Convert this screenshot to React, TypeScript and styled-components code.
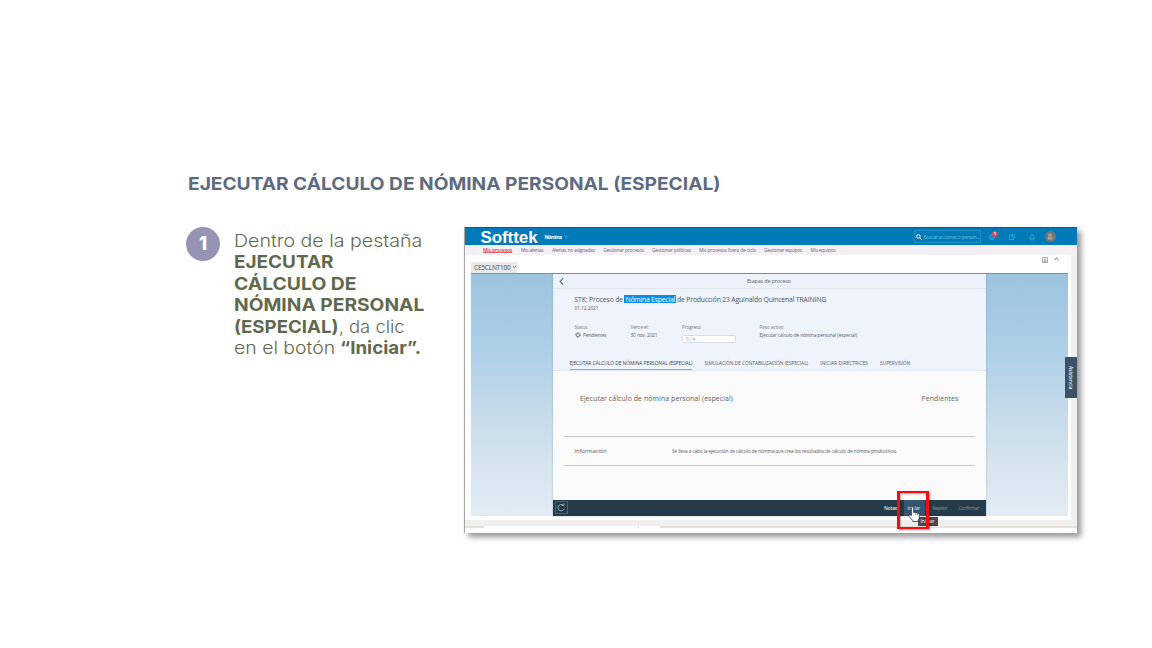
import React, { useLayoutEffect, useRef, useState } from "react";
import styled, { createGlobalStyle } from "styled-components";

const GlobalStyle = createGlobalStyle`
  * { box-sizing: border-box; }
  body { margin: 0; background: #fff; }
`;

const Slide = styled.main`
  width: 1152px;
  height: 648px;
  padding: 172px 0 0 186px;
  overflow: hidden;
  background: #fff;
  font-family: Inter, "Open Sans", sans-serif;
`;

const FitBox = styled.span<{ $w: number }>`
  display: inline-block;
  width: ${(p) => p.$w}px;
  white-space: nowrap;
  flex: none;
`;
const Run = styled.span`
  display: inline-block;
  transform-origin: 0 50%;
`;

/* Tracks a run of text so that it fills a given measure. */
function Fit({ w, children }: { w: number; children: string }) {
  const ref = useRef<HTMLSpanElement>(null);
  const [tracking, setTracking] = useState(0);
  useLayoutEffect(() => {
    const el = ref.current;
    if (el) setTracking((w - el.getBoundingClientRect().width) / children.length);
  }, [w, children]);
  return (
    <FitBox $w={w}>
      <span ref={ref} style={{ letterSpacing: tracking }}>{children}</span>
    </FitBox>
  );
}

function Wide({ w, children }: { w: number; children: string }) {
  const ref = useRef<HTMLSpanElement>(null);
  const [scale, setScale] = useState(1);
  useLayoutEffect(() => {
    const el = ref.current;
    if (el) setScale(w / el.offsetWidth);
  }, [w, children]);
  return (
    <FitBox $w={w}>
      <Run ref={ref} style={{ transform: `scaleX(${scale})` }}>{children}</Run>
    </FitBox>
  );
}

const Heading = styled.h1`
  margin: 0 0 32px 1.5px;
  height: 23px;
  font-size: 17.8px;
  line-height: 23px;
  font-weight: 650;
  color: #5d6b80;
`;

const Columns = styled.div`
  display: flex;
  align-items: flex-start;
`;

const StepBadge = styled.div`
  width: 34px;
  height: 34px;
  border-radius: 50%;
  background: #9793b5;
  color: #fff;
  font-size: 18.5px;
  line-height: 33px;
  font-weight: 800;
  text-align: center;
`;

const StepText = styled.p`
  width: 216px;
  margin: 2.5px 0 0 14px;
  font-size: 17.6px;
  line-height: 21.6px;
  font-weight: 300;
  color: #5f694e;
  b { font-weight: 700; }
`;
const StepLine = styled.span`
  display: flex;
  height: 21.6px;
`;
const Quote = styled.b`
  margin-left: 4.5px;
`;

const Capture = styled.section`
  position: relative;
  width: 613.5px;
  height: 306px;
  margin-left: 13.5px;
  background: #fff;
  border-left: 1px solid #a6a6a6;
  box-shadow: 4px 4px 6px rgba(0, 0, 0, 0.42);
  font-family: "Open Sans", "Noto Sans", sans-serif;
`;

const TopBar = styled.header`
  display: flex;
  align-items: center;
  height: 18px;
  border-top: 1.5px solid #34505f;
  background: #027ab8;
  padding-left: 16px;
  color: #fff;
`;
const Brand = styled.div`
  font: bold 17px/17px "Liberation Sans", Arial, sans-serif;
  padding-top: 1px;
  width: 64px;
`;
const AppName = styled.div`
  display: flex;
  align-items: center;
  gap: 2px;
  width: 369px;
  padding-top: 1px;
  font-size: 5px;
  line-height: 7px;
  font-weight: 700;
`;
const Search = styled.div`
  display: flex;
  align-items: center;
  gap: 2px;
  width: 67px;
  height: 13px;
  padding-left: 1px;
  border: 1px solid #1c91c5;
  color: #5cc0dd;
  font-size: 5px;
  line-height: 8px;
`;
const TopIcons = styled.div`
  display: flex;
  align-items: center;
  gap: 12px;
  margin-left: 7px;
  color: #3fb7d8;
`;
const IconSlot = styled.div`
  position: relative;
  width: 8px;
  height: 8px;
  svg { display: block; }
`;
const Alert = styled.i`
  position: absolute;
  left: 4.5px;
  top: -2px;
  width: 6px;
  height: 6px;
  border-radius: 50%;
  background: #e4464f;
  color: #fff;
  font: 700 4px/6px "Open Sans", sans-serif;
  text-align: center;
`;
const Avatar = styled.div`
  display: grid;
  place-items: center;
  width: 10.5px;
  height: 10.5px;
  margin-left: -2.5px;
  border-radius: 50%;
  background: #747474;
`;

const Nav = styled.nav`
  display: grid;
  grid-template-columns: 38px 31px 51.5px 48.5px 47px 65px 46.5px 30px;
  height: 9.5px;
  padding-left: 18.5px;
  background: #f2f0f2;
  color: #72598a;
  font-size: 4.8px;
  line-height: 10px;
`;
const NavItem = styled.div<{ $active?: boolean }>`
  height: 7.5px;
  ${(p) => p.$active && "width: 29px; color: #d9353d; border-bottom: 1px solid #e46a70; font-weight: 600;"}
`;

const Work = styled.div`
  height: 265px;
  padding: 0 3px 0 6px;
  border-right: 6px solid #f0f0f0;
`;
const Toolbar = styled.div`
  display: flex;
  justify-content: space-between;
  height: 19.5px;
  border-bottom: 1.5px solid #5d98bd;
`;
const System = styled.div`
  display: flex;
  align-items: center;
  gap: 1px;
  height: 11px;
  width: 46px;
  margin-top: 7px;
  padding-left: 3.5px;
  background: #e9e9eb;
  color: #45484d;
  font-size: 6.5px;
  line-height: 11px;
`;
const ToolbarIcons = styled.div`
  display: flex;
  gap: 5.5px;
  padding: 2px 9.5px 0 0;
`;
const Sky = styled.div`
  display: flex;
  justify-content: center;
  height: 241.5px;
  background: linear-gradient(#9cc3df 0%, #aecfe8 32%, #c4d9e8 55%, #d5e4ee 78%, #e2ebf4 100%);
`;

const Panel = styled.article`
  display: flex;
  flex-direction: column;
  width: 432.5px;
  background: #fafafb;
  color: #5a5d62;
  box-shadow: 0 0 2px rgba(90, 120, 150, 0.45);
`;
const PanelTop = styled.div`
  display: flex;
  align-items: center;
  height: 15px;
  padding-left: 5px;
  border-bottom: 1px solid #e2e7ef;
  background: #edf2fa;
  font-size: 5.4px;
  line-height: 9px;
  svg { margin-right: 182px; }
`;
const Summary = styled.div`
  height: 82px;
  padding: 5.5px 0 0 21.5px;
  background: #eef3fc;
  border-bottom: 1px solid #e2e8ef;
`;
const ProcessTitle = styled.h2`
  display: flex;
  margin: 0;
  font-size: 6.9px;
  line-height: 9px;
  height: 9.5px;
  font-weight: 400;
  color: #505359;
`;
const Marked = styled.span`
  height: 8.5px;
  width: 52px;
  margin: 0 1.5px 0 0.5px;
  padding-left: 2px;
  background: #078ae8;
  color: #fff;
`;
const ProcessDate = styled.div`
  font-size: 4.9px;
  line-height: 9px;
`;
const Facts = styled.dl`
  display: grid;
  grid-template-columns: 56px 51.5px 77.5px 120px;
  height: 34.5px;
  margin: 10px 0 0;
  font-size: 4.7px;
  line-height: 8px;
  align-content: start;
`;
const Fact = styled.div`
  dt { color: #73777d; }
  dd { display: flex; align-items: center; gap: 2.5px; margin: 0; height: 7.5px; }
`;
const Progress = styled.div`
  width: 53.5px;
  height: 8.5px;
  margin-top: 3.5px;
  padding-left: 3px;
  border: 1px solid #d9dde3;
  border-radius: 2px;
  background: #fff;
  font-size: 4.5px;
  line-height: 7px;
  color: #96999d;
`;
const Tabs = styled.div`
  display: grid;
  grid-template-columns: 135px 115.5px 60px 40px;
  margin-left: -5px;
  font-size: 4.9px;
  line-height: 10px;
`;
const Tab = styled.div<{ $active?: boolean }>`
  height: 12.5px;
  ${(p) => p.$active && "width: 122.5px; color: #3d4249; border-bottom: 1px solid #7fb0c7;"}
`;

const Detail = styled.div`
  flex: 1;
  padding: 0 11px;
`;
const DetailTitle = styled.div`
  display: flex;
  justify-content: space-between;
  height: 65px;
  padding: 23px 16px 0 16px;
  font-size: 6.9px;
  line-height: 10px;
`;
const InfoRow = styled.div`
  display: flex;
  height: 29.5px;
  padding-left: 10.5px;
  border: solid #c6c8ca;
  border-width: 1px 0;
  line-height: 29px;
  font-size: 4.8px;
`;
const InfoLabel = styled.div`
  width: 97.5px;
  font-size: 5.9px;
`;

const Footer = styled.footer`
  display: flex;
  align-items: center;
  height: 15.5px;
  padding-left: 2px;
  background: #263b4a;
  font-size: 4.8px;
  line-height: 15px;
  color: #8597a5;
`;
const Refresh = styled.div`
  display: grid;
  place-items: center;
  width: 13px;
  height: 13px;
  margin-right: 316px;
  border: 1px solid #446378;
`;
const Action = styled.div<{ $w: number; $state?: "on" | "hover" }>`
  width: ${(p) => p.$w}px;
  height: 15.5px;
  padding-top: 0.5px;
  ${(p) => p.$state === "on" && "color: #e3e9ed; font-weight: 600;"}
  ${(p) => p.$state === "hover" && "padding-left: 4px; margin-right: 8px; background: #36566f; color: #a8d5ef; font-weight: 600;"}
`;

const ScrollStrip = styled.div`
  height: 6px;
  background: #efefef;
`;
const Ruler = styled.div`
  display: flex;
  height: 2px;
  background: #e4e2da;
`;
const RulerGap = styled.i<{ $w: number; $left: number }>`
  width: ${(p) => p.$w}px;
  margin-left: ${(p) => p.$left}px;
  background: #fafafa;
`;

const Assistance = styled.aside`
  position: absolute;
  right: 0;
  top: 130px;
  display: grid;
  place-items: center;
  width: 12px;
  height: 40.5px;
  background: #3a5366;
  color: #e8edf1;
  font-size: 4.8px;
  line-height: 8px;
  font-weight: 600;
  writing-mode: vertical-rl;
`;
const Tooltip = styled.div`
  position: absolute;
  left: 453px;
  top: 289.5px;
  width: 20px;
  height: 9.5px;
  padding-left: 3px;
  background: #4b4847;
  color: #fff;
  font-size: 5px;
  line-height: 9px;
`;
const Highlight = styled.div`
  position: absolute;
  left: 432px;
  top: 263.5px;
  width: 32px;
  height: 38.5px;
  border: 3px solid #f20d12;
  border-width: 2.5px 3px;
  box-shadow: 1px 1px 2px rgba(0, 0, 0, 0.4), inset 1px 1px 2px rgba(0, 0, 0, 0.3);
`;
const Pointer = styled.svg`
  position: absolute;
  left: 443.5px;
  top: 278.5px;
`;

const Chevron = ({ up, color }: { up?: boolean; color: string }) => (
  <svg width="5" height="4" viewBox="0 0 5 4" fill="none" stroke={color} strokeWidth=".9">
    <path d={up ? "M.4 3 2.5 1 4.6 3" : "M.8 1.2 2.5 2.7 4.2 1.2"} />
  </svg>
);

export default function App() {
  return (
    <Slide>
      <GlobalStyle />
      <Heading><Wide w={533}>EJECUTAR CÁLCULO DE NÓMINA PERSONAL (ESPECIAL)</Wide></Heading>
      <Columns>
        <StepBadge>1</StepBadge>
        <StepText>
          <StepLine><Wide w={188}>Dentro de la pestaña</Wide></StepLine>
          <StepLine><b><Wide w={99}>EJECUTAR</Wide></b></StepLine>
          <StepLine><b><Wide w={123}>CÁLCULO DE</Wide></b></StepLine>
          <StepLine><b><Wide w={190}>NÓMINA PERSONAL</Wide></b></StepLine>
          <StepLine><b><Wide w={105}>(ESPECIAL)</Wide></b><Fit w={10}>,</Fit><Wide w={55.5}>da clic</Wide></StepLine>
          <StepLine><Wide w={101.5}>en el botón</Wide><Quote><Wide w={81}>“Iniciar”.</Wide></Quote></StepLine>
        </StepText>

        <Capture>
          <TopBar>
            <Brand><Fit w={57}>Softtek</Fit></Brand>
            <AppName><Fit w={17}>Nómina</Fit><Chevron color="#45c4e0" /></AppName>
            <Search>
              <svg width="6" height="6" viewBox="0 0 6 6" fill="none" stroke="#fff" strokeWidth=".9">
                <circle cx="2.4" cy="2.4" r="1.8" /><path d="m3.7 3.7 2 2" />
              </svg>
              <Fit w={56}>Buscar acciones o person...</Fit>
            </Search>
            <TopIcons>
              <IconSlot>
                <svg width="8" height="8" viewBox="0 0 8 8" fill="none" stroke="currentColor" strokeWidth=".8">
                  <circle cx="4" cy="4.2" r="2.4" /><path d="m2.9 4.2.9.9 1.5-1.7" />
                </svg>
                <Alert>1</Alert>
              </IconSlot>
              <IconSlot>
                <svg width="8" height="8" viewBox="0 0 8 8" fill="none" stroke="currentColor" strokeWidth=".7">
                  <path d="M4.4 2H1.5v4.4h4V4.8M4.2 1.8h2.4v2.4H4.2z" />
                </svg>
              </IconSlot>
              <IconSlot>
                <svg width="8" height="8" viewBox="0 0 8 8" fill="none" stroke="currentColor" strokeWidth=".8">
                  <path d="M1.7 5.8C2.6 4.9 2.2 1.8 4 1.8s1.4 3.1 2.3 4ZM3.3 6.9h1.4" />
                </svg>
              </IconSlot>
              <Avatar>
                <svg width="6" height="7" viewBox="0 0 6 7" fill="none" stroke="#c8c8c8" strokeWidth=".7">
                  <circle cx="3" cy="2" r="1.2" /><path d="M1 6V4.7q2-1.8 4 0V6Z" />
                </svg>
              </Avatar>
            </TopIcons>
          </TopBar>

          <Nav>
            <NavItem $active><Fit w={29}>Mis procesos</Fit></NavItem>
            <NavItem><Fit w={22.5}>Mis alertas</Fit></NavItem>
            <NavItem><Fit w={43}>Alertas no asignadas</Fit></NavItem>
            <NavItem><Fit w={40.5}>Gestionar procesos</Fit></NavItem>
            <NavItem><Fit w={39}>Gestionar políticas</Fit></NavItem>
            <NavItem><Fit w={57}>Mis procesos fuera de ciclo</Fit></NavItem>
            <NavItem><Fit w={38}>Gestionar equipos</Fit></NavItem>
            <NavItem><Fit w={25}>Mis equipos</Fit></NavItem>
          </Nav>

          <Work>
            <Toolbar>
              <System><Fit w={36.5}>CE5CLNT100</Fit><Chevron color="#777" /></System>
              <ToolbarIcons>
                <svg width="6" height="6" viewBox="0 0 6 6" fill="none" stroke="#888" strokeWidth=".7">
                  <path d="M.5.5h5v5h-5zM1.7 4.5 3 1.8l1.3 2.7Z" />
                </svg>
                <Chevron up color="#555" />
              </ToolbarIcons>
            </Toolbar>
            <Sky>
              <Panel>
                <PanelTop>
                  <svg width="7" height="9" viewBox="0 0 7 9" fill="none" stroke="#4e6f89" strokeWidth="1.1">
                    <path d="M5.2 1.2 2.2 4.4l3 3.2" />
                  </svg>
                  <Fit w={44}>Etapas de proceso</Fit>
                </PanelTop>
                <Summary>
                  <ProcessTitle>
                    <Fit w={48.5}>STK: Proceso de</Fit>
                    <Marked><Fit w={49.5}>Nómina Especial</Fit></Marked>
                    <Fit w={149}>de Producción 23 Aguinaldo Quincenal TRAINING</Fit>
                  </ProcessTitle>
                  <ProcessDate><Fit w={24}>01.12.2021</Fit></ProcessDate>
                  <Facts>
                    <Fact>
                      <dt><Fit w={13}>Status</Fit></dt>
                      <dd>
                        <svg width="6" height="6" viewBox="0 0 5 5" fill="none" stroke="#444" strokeWidth=".8">
                          <path d="M2.5.5 4.5 2.5 2.5 4.5.5 2.5Z" />
                        </svg>
                        <Fit w={23.5}>Pendientes</Fit>
                      </dd>
                    </Fact>
                    <Fact><dt><Fit w={18}>Vence el:</Fit></dt><dd><Fit w={27}>30 nov. 2021</Fit></dd></Fact>
                    <Fact><dt><Fit w={19}>Progreso</Fit></dt><Progress>0 / 4</Progress></Fact>
                    <Fact>
                      <dt><Fit w={24}>Paso activo</Fit></dt>
                      <dd><Fit w={97.5}>Ejecutar cálculo de nómina personal (especial)</Fit></dd>
                    </Fact>
                  </Facts>
                  <Tabs>
                    <Tab $active><Fit w={123}>EJECUTAR CÁLCULO DE NÓMINA PERSONAL (ESPECIAL)</Fit></Tab>
                    <Tab><Fit w={103.5}>SIMULACIÓN DE CONTABILIZACIÓN (ESPECIAL)</Fit></Tab>
                    <Tab><Fit w={48}>INICIAR DIRECTRICES</Fit></Tab>
                    <Tab><Fit w={30.5}>SUPERVISIÓN</Fit></Tab>
                  </Tabs>
                </Summary>
                <Detail>
                  <DetailTitle>
                    <Fit w={153}>Ejecutar cálculo de nómina personal (especial)</Fit>
                    <Fit w={37}>Pendientes</Fit>
                  </DetailTitle>
                  <InfoRow>
                    <InfoLabel><Fit w={32}>Información</Fit></InfoLabel>
                    <Fit w={225}>Se lleva a cabo la ejecución de cálculo de nómina que crea los resultados de cálculo de nómina productivos.</Fit>
                  </InfoRow>
                </Detail>
                <Footer>
                  <Refresh>
                    <svg width="9" height="9" viewBox="0 0 9 9" fill="none" stroke="#a5bac8" strokeWidth=".9">
                      <path d="M7.2 5.8A3.2 3.2 0 1 1 6.2 2.2M4.8 2.3h2.2V.5" />
                    </svg>
                  </Refresh>
                  <Action $w={19.5} $state="on"><Fit w={13}>Notas</Fit></Action>
                  <Action $w={21} $state="hover"><Fit w={12.5}>Iniciar</Fit></Action>
                  <Action $w={26}><Fit w={14.5}>Repetir</Fit></Action>
                  <Action $w={22}><Fit w={20.5}>Confirmar</Fit></Action>
                </Footer>
              </Panel>
            </Sky>
          </Work>
          <ScrollStrip />
          <Ruler><RulerGap $w={154} $left={19} /><RulerGap $w={21} $left={1} /></Ruler>

          <Assistance><span>Asistencia</span></Assistance>
          <Tooltip><Fit w={14}>Iniciar</Fit></Tooltip>
          <Highlight />
          <Pointer width="13.5" height="17" viewBox="0 0 12 15">
            <path
              d="M3 8.5V2q0-1.2 1-1.2T5 2v3.8q1-.6 1.8.2 1-.4 1.6.5 1.6-.3 1.6 1v2.6q0 1.6-1 2.6v1H4.2v-.9Q2.5 11.2 1.2 9.4q-.7-1.2.2-1.5.7-.2 1.6.6Z"
              fill="#fff" stroke="#27323a" strokeWidth=".7"
            />
            <path d="M6.8 6v2M8.4 6.5v1.7" stroke="#555" strokeWidth=".5" />
          </Pointer>
        </Capture>
      </Columns>
    </Slide>
  );
}
